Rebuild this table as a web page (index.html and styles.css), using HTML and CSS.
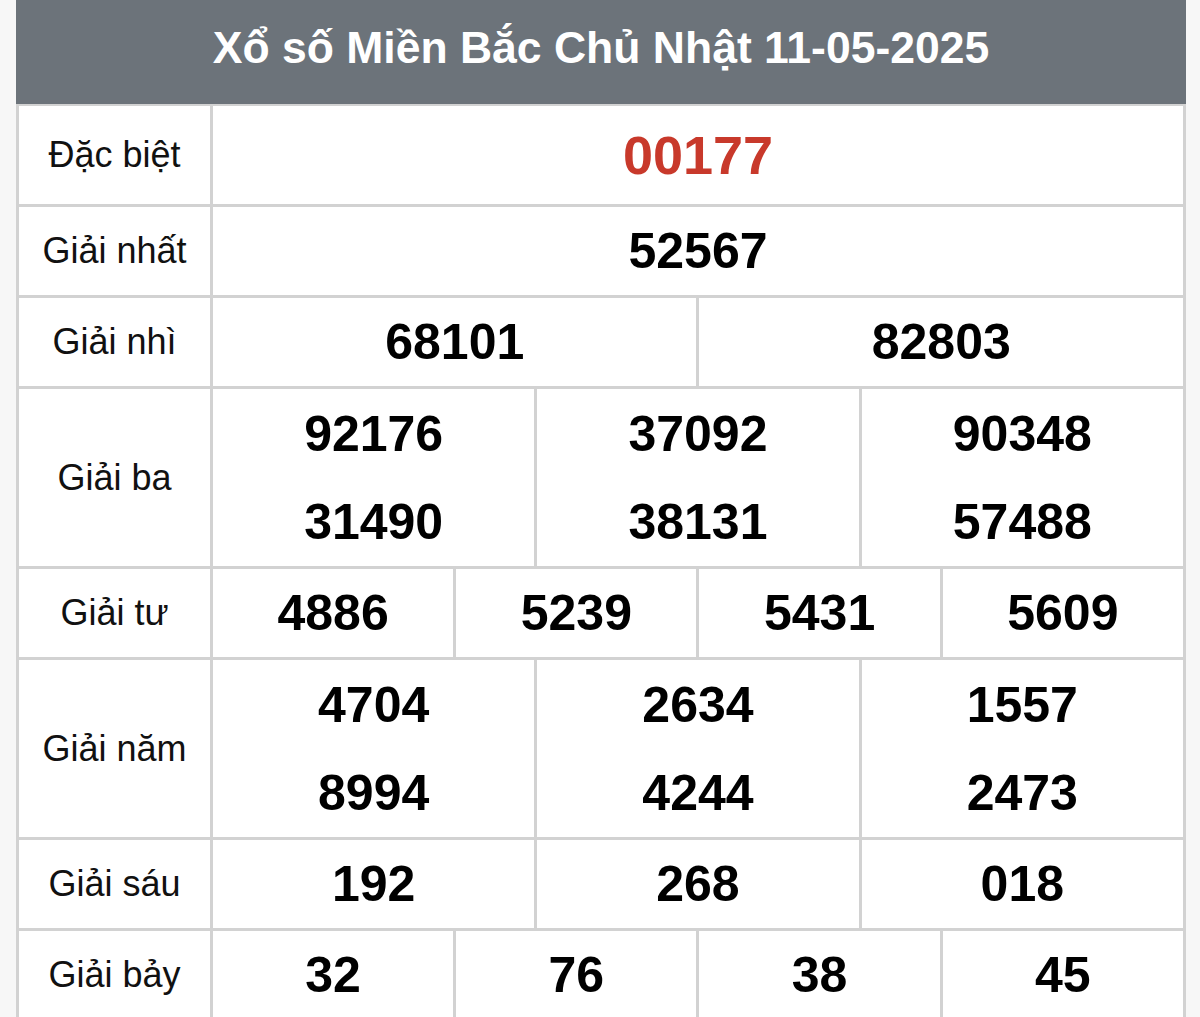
FILE: index.html
```html
<!DOCTYPE html>
<html lang="vi">
<head>
<meta charset="utf-8">
<title>Xổ số Miền Bắc Chủ Nhật 11-05-2025</title>
<link rel="stylesheet" href="styles.css">
</head>
<body>
<div class="wrap">
  <div class="head">Xổ số Miền Bắc Chủ Nhật 11-05-2025</div>
  <table class="kq">
    <colgroup>
      <col class="c-label">
      <col span="12">
    </colgroup>
    <tbody>
      <tr class="r-db">
        <th>Đặc biệt</th>
        <td colspan="12" class="special">00177</td>
      </tr>
      <tr>
        <th>Giải nhất</th>
        <td colspan="12">52567</td>
      </tr>
      <tr>
        <th>Giải nhì</th>
        <td colspan="6">68101</td>
        <td colspan="6">82803</td>
      </tr>
      <tr class="double">
        <th>Giải ba</th>
        <td colspan="4"><div>92176</div><div>31490</div></td>
        <td colspan="4"><div>37092</div><div>38131</div></td>
        <td colspan="4"><div>90348</div><div>57488</div></td>
      </tr>
      <tr>
        <th>Giải tư</th>
        <td colspan="3">4886</td>
        <td colspan="3">5239</td>
        <td colspan="3">5431</td>
        <td colspan="3">5609</td>
      </tr>
      <tr class="double">
        <th>Giải năm</th>
        <td colspan="4"><div>4704</div><div>8994</div></td>
        <td colspan="4"><div>2634</div><div>4244</div></td>
        <td colspan="4"><div>1557</div><div>2473</div></td>
      </tr>
      <tr>
        <th>Giải sáu</th>
        <td colspan="4">192</td>
        <td colspan="4">268</td>
        <td colspan="4">018</td>
      </tr>
      <tr>
        <th>Giải bảy</th>
        <td colspan="3">32</td>
        <td colspan="3">76</td>
        <td colspan="3">38</td>
        <td colspan="3">45</td>
      </tr>
    </tbody>
  </table>
</div>
</body>
</html>
```

FILE: styles.css
```css
html, body {
  margin: 0;
  padding: 0;
  background: #f7f7f7;
}
body {
  font-family: "Liberation Sans", Arial, sans-serif;
  color: #000;
}
.wrap {
  margin: 0 14px 0 16px;
  width: 1170px;
  background: #fff;
}
.head {
  height: 104px;
  background: #6c737a;
  color: #fff;
  font-weight: bold;
  font-size: 44.5px;
  line-height: 96px;
  text-align: center;
}
.kq {
  width: 1170px;
  border-collapse: collapse;
  table-layout: fixed;
  background: #fff;
}
.c-label {
  width: 194px;
}
.kq th,
.kq td {
  border: 3px solid #d2d2d2;
  padding: 0;
  text-align: center;
  vertical-align: middle;
}
.kq tr:first-child th,
.kq tr:first-child td {
  border-top-width: 2px;
}
.kq th {
  font-weight: normal;
  font-size: 36px;
  color: #111;
  height: 88px;
}
.kq td {
  font-weight: bold;
  font-size: 50px;
  height: 88px;
}
.kq .r-db th,
.kq .r-db td {
  height: 98px;
}
.kq td.special {
  color: #c8392b;
  font-size: 54px;
}
.kq .double td div {
  height: 88px;
  line-height: 88px;
}
.kq .double th,
.kq .double td {
  height: 177px;
}
```
